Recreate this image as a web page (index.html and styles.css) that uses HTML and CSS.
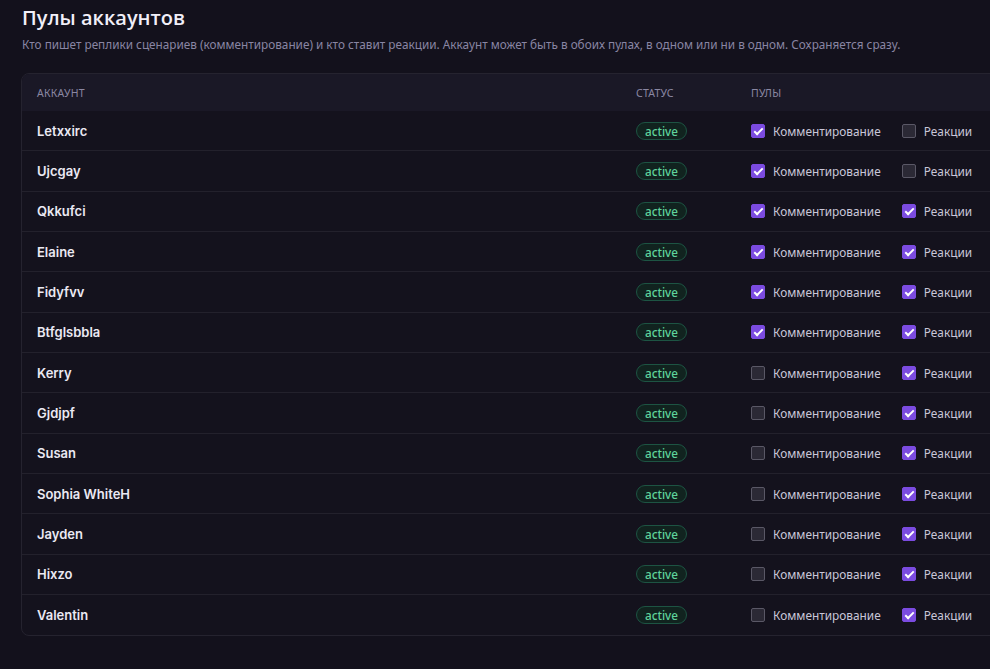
FILE: index.html
```html
<!DOCTYPE html>
<html lang="ru">
<head>
<meta charset="utf-8">
<title>Пулы аккаунтов</title>
<link rel="stylesheet" href="styles.css">
</head>
<body>
<main class="page">
  <h1 class="title">Пулы аккаунтов</h1>
  <p class="subtitle">Кто пишет реплики сценариев (комментирование) и кто ставит реакции. Аккаунт может быть в обоих пулах, в одном или ни в одном. Сохраняется сразу.</p>
  <div class="card">
    <div class="row head">
      <div class="cell">Аккаунт</div>
      <div class="cell">Статус</div>
      <div class="cell">Пулы</div>
    </div>
    <div class="row"><div class="cell name">Letxxirc</div><div class="cell"><span class="badge">active</span></div><div class="cell pools"><label class="opt"><span class="cb on"></span>Комментирование</label><label class="opt"><span class="cb"></span>Реакции</label></div></div>
    <div class="row"><div class="cell name">Ujcgay</div><div class="cell"><span class="badge">active</span></div><div class="cell pools"><label class="opt"><span class="cb on"></span>Комментирование</label><label class="opt"><span class="cb"></span>Реакции</label></div></div>
    <div class="row"><div class="cell name">Qkkufci</div><div class="cell"><span class="badge">active</span></div><div class="cell pools"><label class="opt"><span class="cb on"></span>Комментирование</label><label class="opt"><span class="cb on"></span>Реакции</label></div></div>
    <div class="row"><div class="cell name">Elaine</div><div class="cell"><span class="badge">active</span></div><div class="cell pools"><label class="opt"><span class="cb on"></span>Комментирование</label><label class="opt"><span class="cb on"></span>Реакции</label></div></div>
    <div class="row"><div class="cell name">Fidyfvv</div><div class="cell"><span class="badge">active</span></div><div class="cell pools"><label class="opt"><span class="cb on"></span>Комментирование</label><label class="opt"><span class="cb on"></span>Реакции</label></div></div>
    <div class="row"><div class="cell name">Btfglsbbla</div><div class="cell"><span class="badge">active</span></div><div class="cell pools"><label class="opt"><span class="cb on"></span>Комментирование</label><label class="opt"><span class="cb on"></span>Реакции</label></div></div>
    <div class="row"><div class="cell name">Kerry</div><div class="cell"><span class="badge">active</span></div><div class="cell pools"><label class="opt"><span class="cb"></span>Комментирование</label><label class="opt"><span class="cb on"></span>Реакции</label></div></div>
    <div class="row"><div class="cell name">Gjdjpf</div><div class="cell"><span class="badge">active</span></div><div class="cell pools"><label class="opt"><span class="cb"></span>Комментирование</label><label class="opt"><span class="cb on"></span>Реакции</label></div></div>
    <div class="row"><div class="cell name">Susan</div><div class="cell"><span class="badge">active</span></div><div class="cell pools"><label class="opt"><span class="cb"></span>Комментирование</label><label class="opt"><span class="cb on"></span>Реакции</label></div></div>
    <div class="row"><div class="cell name">Sophia WhiteH</div><div class="cell"><span class="badge">active</span></div><div class="cell pools"><label class="opt"><span class="cb"></span>Комментирование</label><label class="opt"><span class="cb on"></span>Реакции</label></div></div>
    <div class="row"><div class="cell name">Jayden</div><div class="cell"><span class="badge">active</span></div><div class="cell pools"><label class="opt"><span class="cb"></span>Комментирование</label><label class="opt"><span class="cb on"></span>Реакции</label></div></div>
    <div class="row"><div class="cell name">Hixzo</div><div class="cell"><span class="badge">active</span></div><div class="cell pools"><label class="opt"><span class="cb"></span>Комментирование</label><label class="opt"><span class="cb on"></span>Реакции</label></div></div>
    <div class="row last"><div class="cell name">Valentin</div><div class="cell"><span class="badge">active</span></div><div class="cell pools"><label class="opt"><span class="cb"></span>Комментирование</label><label class="opt"><span class="cb on"></span>Реакции</label></div></div>
  </div>
</main>
</body>
</html>
```

FILE: styles.css
```css
html, body {
  margin: 0;
  padding: 0;
  background: #13111c;
  overflow: hidden;
}
body {
  font-family: "Noto Sans", "Open Sans", "Liberation Sans", sans-serif;
  color: #e6e4ef;
  width: 990px;
  height: 669px;
}
.page {
  padding: 4px 0 0 22px;
}
.title {
  margin: 0;
  font-family: "Open Sans", "Noto Sans", sans-serif;
  font-size: 20px;
  font-weight: 600;
  line-height: 28px;
  color: #f1eff8;
}
.subtitle {
  margin: 3px 0 0;
  font-size: 11.77px;
  line-height: 18px;
  color: #8985a3;
}
.card {
  margin: 20px 0 0 -1px;
  width: 1010px;
  border: 1px solid #25232f;
  border-radius: 8px;
  background: #14121d;
  overflow: hidden;
}
.row {
  display: grid;
  grid-template-columns: 599px 115px 1fr;
  align-items: center;
  height: 40.33px;
  border-bottom: 1px solid #23212c;
  box-sizing: border-box;
}
.row.last {
  border-bottom: none;
}
.row.head {
  height: 37px;
  background: #1a1826;
  border-bottom: none;
  font-size: 10.5px;
  color: #8a87a2;
  text-transform: uppercase;
  letter-spacing: 0.2px;
}
.cell {
  padding-left: 15px;
  display: flex;
  align-items: center;
}
.name {
  font-family: Inter, "Noto Sans", sans-serif;
  font-weight: 600;
  font-size: 13px;
  color: #ebe9f3;
}
.badge {
  display: inline-block;
  padding: 0 8px;
  height: 18px;
  line-height: 16px;
  box-sizing: border-box;
  border: 1px solid #1d5443;
  border-radius: 9px;
  background: #11231f;
  color: #5fd49c;
  font-size: 11.7px;
  font-weight: 500;
}
.pools {
  gap: 21px;
}
.opt {
  display: flex;
  align-items: center;
  gap: 8px;
  font-size: 11.85px;
  color: #c9c6d8;
}
.cb {
  width: 14px;
  height: 14px;
  box-sizing: border-box;
  border-radius: 2px;
  border: 1px solid #5a5866;
  background: #2b2935;
  position: relative;
}
.cb.on {
  background: #7b4be0;
  border-color: #7b4be0;
}
.cb.on::after {
  content: "";
  position: absolute;
  left: 4px;
  top: 1px;
  width: 3px;
  height: 7px;
  border: solid #ffffff;
  border-width: 0 2px 2px 0;
  transform: rotate(45deg);
}
```
